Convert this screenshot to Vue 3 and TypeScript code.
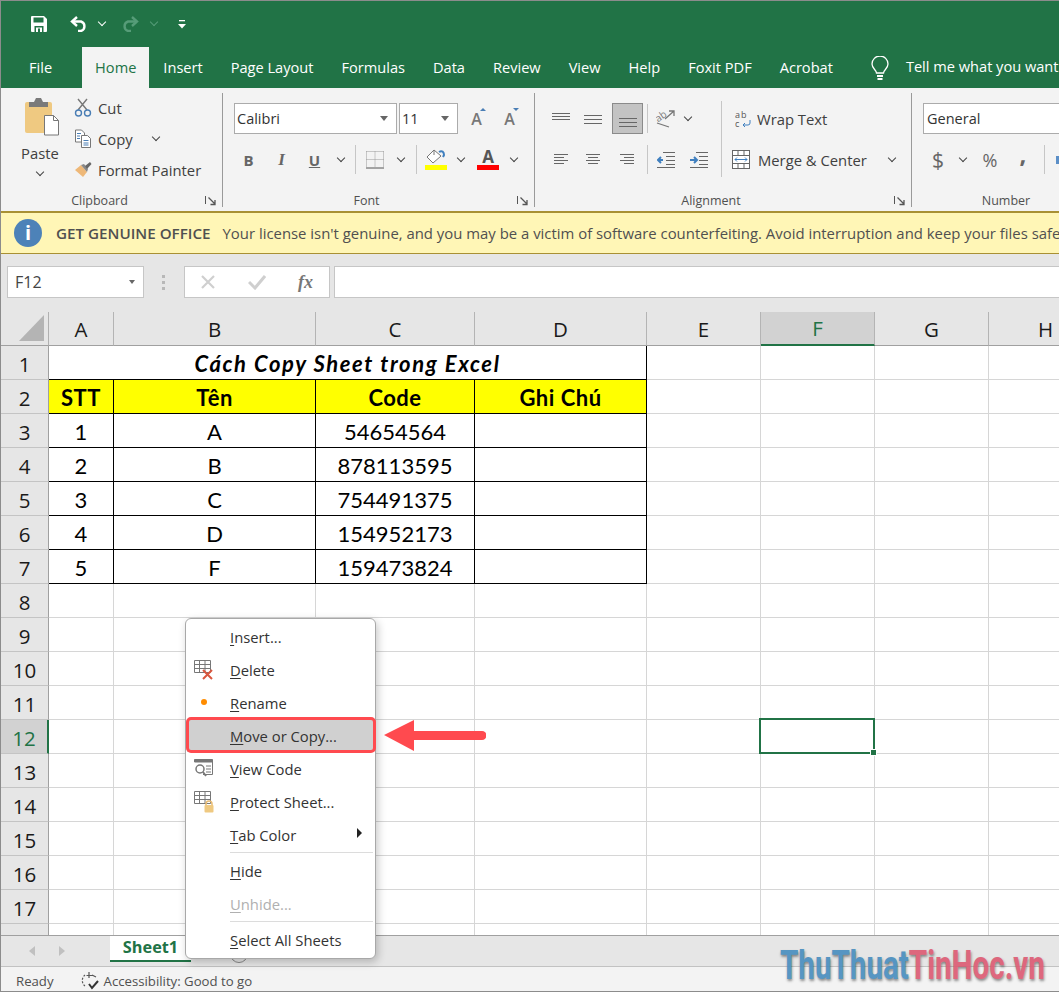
<template>
  <div class="window">
    <div class="titlebar">
      <svg class="save" width="16" height="16" viewBox="0 0 16 16">
        <path d="M0 1a1 1 0 0 1 1-1h12l3 3v12a1 1 0 0 1-1 1H1a1 1 0 0 1-1-1z" fill="#fff" />
        <rect x="2.5" y="1.5" width="10" height="5" fill="#217346" />
        <rect x="3.5" y="10" width="9" height="6" fill="#217346" />
        <rect x="5" y="11.5" width="6" height="4.5" fill="#fff" />
        <rect x="7" y="12.5" width="2" height="3.5" fill="#217346" />
      </svg>
      <svg class="undo" width="18" height="16" viewBox="0 0 18 16" fill="none" stroke="#fff" stroke-width="2.4">
        <path d="M7 1 2 5.500 7 10" />
        <path d="M2.500 5.500H11a5 5 0 0 1 0 9.500H8" />
      </svg>
      <span class="chev chev-white c1"></span>
      <svg class="redo" width="18" height="16" viewBox="0 0 18 16" fill="none" stroke="#569c78" stroke-width="2.4">
        <path d="M11 1l5 4.500L11 10" />
        <path d="M15.500 5.500H7a5 5 0 0 0 0 9.500h3" />
      </svg>
      <span class="chev chev-dim c2"></span>
      <svg class="custom" width="8" height="9" viewBox="0 0 8 9">
        <rect x="1" y="0" width="6" height="1.300" fill="#fff" />
        <path d="M0 4h8L4 8.500z" fill="#fff" />
      </svg>
    </div>

    <div class="tabs">
      <span
        v-for="tab in tabs"
        :key="tab"
        class="tab"
        :class="{ active: tab === 'Home' }"
      >{{ tab }}</span>
      <svg class="bulb" width="18" height="25" viewBox="0 0 18 25" fill="none" stroke="#fff" stroke-width="1.300">
        <path d="M5.500 17c0-3-4.500-4.500-4.500-9a8 8 0 0 1 16 0c0 4.500-4.500 6-4.500 9z" />
        <path d="M6 20h6M6.500 23h5" stroke-width="1.800" />
      </svg>
      <span class="tell">Tell me what you want to do</span>
    </div>

    <div class="ribbon">
      <!-- Clipboard -->
      <section class="group clipboard">
        <div class="body clip-body">
          <div class="paste">
            <svg class="paste-icon" width="36" height="40" viewBox="0 0 36 40">
              <rect x="1" y="5" width="27" height="31" rx="2" fill="#efc981" />
              <path d="M5 5h5l2-4h5l2 4h5v5H5z" fill="#7a7a7a" />
              <path d="M20.500 18.500h9l5 5v14.500h-14z" fill="#fff" stroke="#777" />
              <path d="M29.500 18.500v5h5" fill="none" stroke="#777" />
            </svg>
            <span class="paste-label">Paste</span>
            <span class="chev"></span>
          </div>
          <div class="clip-list">
            <div class="clip-item">
              <svg width="18" height="19" viewBox="0 0 18 19" fill="none">
                <path d="M4 1l9 11M13 1 4 12" stroke="#777" stroke-width="1.400" />
                <circle cx="4.500" cy="15" r="3" stroke="#4a7eb5" stroke-width="1.400" />
                <circle cx="13.500" cy="15" r="3" stroke="#4a7eb5" stroke-width="1.400" />
              </svg>
              <span>Cut</span>
            </div>
            <div class="clip-item">
              <svg width="18" height="19" viewBox="0 0 18 19" fill="none" stroke="#777">
                <path d="M1.500 1h6l3 3v9h-9z" fill="#fff" />
                <path d="M7.500 6.500h6l3 3v9h-9z" fill="#fff" />
                <path d="M3 4.500h4M3 7h3M3 9.500h3M9.500 11.500h5M9.500 14h5M9.500 16h5" stroke="#4a7eb5" />
              </svg>
              <span>Copy</span>
              <span class="chev copy-chev"></span>
            </div>
            <div class="clip-item">
              <svg width="18" height="18" viewBox="0 0 18 18">
                <path d="M1 9l6-5 6 7-4 5z" fill="#eeb878" />
                <path d="M7 4l3-1 4 5-1 3z" fill="#888" />
                <path d="M11 5l5-4 1.500 2-4.500 5z" fill="#666" />
              </svg>
              <span>Format Painter</span>
            </div>
          </div>
        </div>
        <div class="label-row">
          <span class="label">Clipboard</span>
          <svg class="launcher" width="11" height="10" viewBox="0 0 11 10" fill="none" stroke="#555">
            <path d="M.5 0v8" /><path d="M3.500 1.500 10 8M10 4v4.500H5.500" stroke-width="1.300" />
          </svg>
        </div>
      </section>

      <!-- Font -->
      <section class="group font">
        <div class="body">
          <div class="row font-row1">
            <div class="combo combo-font"><span class="combo-text">Calibri</span><span class="tri"></span></div>
            <div class="combo combo-size"><span class="combo-text">11</span><span class="tri"></span></div>
            <span class="grow-a grow-up">A<i class="mini mini-up"></i></span>
            <span class="grow-a grow-down">A<i class="mini mini-down"></i></span>
          </div>
          <div class="row font-row2">
            <span class="tb w33 fmt fmt-b">B</span>
            <span class="tb w33 fmt fmt-i">I</span>
            <span class="tb w33 fmt fmt-u">U</span>
            <span class="tb w20"><span class="chev"></span></span>
            <span class="vsep sep-a"></span>
            <span class="tb w38">
              <svg width="18" height="18" viewBox="0 0 18 18" fill="none" stroke="#999" stroke-dasharray="1 1">
                <path d="M.5.500h17M.5 8.500h17M.5.500v16M9 .500v16M17.500.500v16" />
                <path d="M0 17h18" stroke="#555" stroke-dasharray="none" />
              </svg>
            </span>
            <span class="tb w14"><span class="chev"></span></span>
            <span class="vsep sep-b"></span>
            <span class="tb w38 stack">
              <svg width="22" height="16" viewBox="0 0 22 16" fill="none">
                <path d="M9 1 2 8l6 6 8-7z" fill="#fff" stroke="#777" />
                <path d="M9 1v5" stroke="#777" />
                <path d="M14 3c3-2 5 0 5 3l-1 2" stroke="#3f7fbf" stroke-width="2" />
              </svg>
              <i class="colorbar yellow"></i>
            </span>
            <span class="tb w12"><span class="chev"></span></span>
            <span class="tb w42 stack">
              <span class="font-color">A</span>
              <i class="colorbar red"></i>
            </span>
            <span class="tb w10"><span class="chev"></span></span>
          </div>
        </div>
        <div class="label-row">
          <span class="label">Font</span>
          <svg class="launcher" width="11" height="10" viewBox="0 0 11 10" fill="none" stroke="#555">
            <path d="M.5 0v8" /><path d="M3.500 1.500 10 8M10 4v4.500H5.500" stroke-width="1.300" />
          </svg>
        </div>
      </section>

      <!-- Alignment -->
      <section class="group alignment">
        <div class="body align-body">
          <div class="align-left">
            <div class="row">
              <span class="tb w32">
                <svg width="20" height="18" viewBox="0 0 20 18" stroke="#666"><path d="M1 3.500h18M1 6.500h18M1 9.500h18" /></svg>
              </span>
              <span class="tb w32">
                <svg width="20" height="18" viewBox="0 0 20 18" stroke="#666"><path d="M1 5.500h18M1 9.500h18M1 13.500h18" /></svg>
              </span>
              <span class="tb w31 selected">
                <svg width="20" height="18" viewBox="0 0 20 18" stroke="#666"><path d="M1 8.500h18M1 12.500h18M1 16.500h18" /></svg>
              </span>
              <span class="vsep sep-c"></span>
              <span class="tb w36">
                <svg width="20" height="18" viewBox="0 0 20 18" fill="none" stroke="#777" stroke-width="1.300">
                  <path d="M1 13l12 4M9 9l9-8M13 1h5v5" />
                  <text x="0" y="10" class="ab" transform="rotate(-35 5 8)">ab</text>
                </svg>
              </span>
              <span class="tb w8"><span class="chev"></span></span>
            </div>
            <div class="row">
              <span class="tb w32">
                <svg width="16" height="14" viewBox="0 0 16 14" stroke="#666"><path d="M1 1.500h14M1 4.500h10M1 7.500h14M1 10.500h10" /></svg>
              </span>
              <span class="tb w32">
                <svg width="16" height="14" viewBox="0 0 16 14" stroke="#666"><path d="M1 1.500h14M3 4.500h10M1 7.500h14M3 10.500h10" /></svg>
              </span>
              <span class="tb w31 ml2">
                <svg width="16" height="14" viewBox="0 0 16 14" stroke="#666"><path d="M1 1.500h14M5 4.500h10M1 7.500h14M5 10.500h10" /></svg>
              </span>
              <span class="vsep sep-e"></span>
              <span class="tb w36">
                <svg width="18" height="16" viewBox="0 0 18 16" fill="none" stroke="#666">
                  <path d="M6 .500h12M9 4.500h9M9 8.500h9M9 12.500h9M0 15.500h18" />
                  <path d="M6 8H1M4 5 1 8l3 3" stroke="#3f7fbf" stroke-width="2" />
                </svg>
              </span>
              <span class="tb w32 shift">
                <svg width="18" height="16" viewBox="0 0 18 16" fill="none" stroke="#666">
                  <path d="M6 .500h12M9 4.500h9M9 8.500h9M9 12.500h9M0 15.500h18" />
                  <path d="M0 8h6M4 5l3 3-3 3" stroke="#3f7fbf" stroke-width="2" />
                </svg>
              </span>
            </div>
          </div>
          <span class="vsep sep-tall"></span>
          <div class="align-right">
            <div class="row wide-btn wrap">
              <svg width="16" height="18" viewBox="0 0 16 18" fill="none">
                <text x="0" y="8" class="abc">ab</text>
                <text x="0" y="17" class="abc">c</text>
                <path d="M15 10v3a2 2 0 0 1-2 2H8M10 13l-2 2 2 2" stroke="#3f7fbf" />
              </svg>
              <span>Wrap Text</span>
            </div>
            <div class="row wide-btn merge">
              <svg width="18" height="19" viewBox="0 0 18 19" fill="none" stroke="#666">
                <rect x=".5" y=".500" width="17" height="18" fill="#fff" />
                <path d="M.5 5.500h17M.5 13.500h17M6 .500v5M12 .500v5M6 13.500v5M12 13.500v5" />
                <path d="M3 9.500h12M5 7.500l-2 2 2 2M13 7.500l2 2-2 2" stroke="#3f7fbf" />
              </svg>
              <span>Merge &amp; Center</span>
              <span class="chev merge-chev"></span>
            </div>
          </div>
        </div>
        <div class="label-row">
          <span class="label">Alignment</span>
          <svg class="launcher" width="11" height="10" viewBox="0 0 11 10" fill="none" stroke="#555">
            <path d="M.5 0v8" /><path d="M3.500 1.500 10 8M10 4v4.500H5.500" stroke-width="1.300" />
          </svg>
        </div>
      </section>

      <!-- Number -->
      <section class="group number">
        <div class="body">
          <div class="row num-row1">
            <div class="combo combo-num"><span class="combo-text">General</span></div>
          </div>
          <div class="row num-row2">
            <span class="tb w32 sym dollar">$</span>
            <span class="tb w18"><span class="chev"></span></span>
            <span class="tb w36 sym pct">%</span>
            <span class="tb w30 sym comma">,</span>
            <span class="vsep sep-d"></span>
            <i class="next-icon"></i>
          </div>
        </div>
        <div class="label-row"><span class="label">Number</span></div>
      </section>
    </div>

    <div class="notice">
      <span class="info">i</span>
      <b>GET GENUINE OFFICE</b>
      <span class="notice-msg">Your license isn't genuine, and you may be a victim of software counterfeiting. Avoid interruption and keep your files safe with genuine Office today.</span>
    </div>

    <div class="formula">
      <div class="namebox"><span>F12</span><span class="tri tri-small"></span></div>
      <span class="dots"></span>
      <div class="fx-box">
        <svg width="16" height="16" viewBox="0 0 16 16" stroke="#cfcfcf" stroke-width="2.200"><path d="M2 2l12 12M14 2 2 14" /></svg>
        <svg width="18" height="16" viewBox="0 0 18 16" fill="none" stroke="#cfcfcf" stroke-width="3"><path d="M1 8l6 6L17 2" /></svg>
        <span class="fx">fx</span>
      </div>
      <div class="formula-input"></div>
    </div>

    <div class="sheet">
      <div class="corner"><i></i></div>
      <div
        v-for="col in columns"
        :key="col"
        class="col-head"
        :class="{ current: col === 'F' }"
      >{{ col }}</div>
      <template v-for="row in rows" :key="row">
        <div class="row-head" :class="{ current: row === 12 }">{{ row }}</div>
        <div v-if="row === 1" class="cell boxed title-cell">Cách Copy Sheet trong Excel</div>
        <template v-else-if="row <= 7">
          <div
            v-for="(text, i) in tableRows[row - 2]"
            :key="i"
            class="cell boxed"
            :class="{ heading: row === 2 }"
          >{{ text }}</div>
        </template>
        <template v-else>
          <div v-for="c in 4" :key="c" class="cell"></div>
        </template>
        <div
          v-for="col in ['E', 'F', 'G', 'H']"
          :key="col"
          class="cell"
          :class="{ picked: row === 12 && col === 'F' }"
        ></div>
      </template>
    </div>

    <div class="sheetbar">
      <span class="nav nav-left"></span>
      <span class="nav nav-right"></span>
      <span class="sheet-tab">Sheet1</span>
      <span class="add-sheet"></span>
    </div>

    <div class="status">
      <span>Ready</span>
      <svg class="a11y" width="20" height="20" viewBox="0 0 20 20" fill="none" stroke="#555" stroke-width="1.200">
        <path d="M5 4a7 7 0 0 0 0 11" stroke-dasharray="2 1.500" />
        <path d="M9 1v6M6.500 4.500h6M12 4l4 2" />
        <path d="M9 13l3 4 6-7" stroke="#333" stroke-width="2" />
      </svg>
      <span>Accessibility: Good to go</span>
    </div>

    <!-- context menu over the sheet -->
    <div class="menu">
      <template v-for="item in menuItems" :key="item.text">
        <div
          class="menu-item"
          :class="{ active: item.text === 'Move or Copy...', disabled: item.text === 'Unhide...' }"
        >
          <span class="menu-icon">
            <svg v-if="item.icon === 'delete'" width="20" height="20" viewBox="0 0 20 20" fill="none">
              <path d="M.5.500h16v12H.5zM.5 4.500h16M.5 8.500h16M5.500.500v12M11 .500v12" stroke="#777" />
              <path d="M9 10l9 9M18 10l-9 9" stroke="#d9573f" stroke-width="2" />
            </svg>
            <span v-else-if="item.icon === 'dot'" class="dot"></span>
            <svg v-else-if="item.icon === 'code'" width="20" height="20" viewBox="0 0 20 20" fill="none" stroke="#777">
              <path d="M.5 3V.500h18v15H9" /><rect x="1" y="1" width="17" height="2" fill="#777" />
              <circle cx="6" cy="10" r="4" stroke-width="1.500" /><path d="M9 13l3 4" stroke-width="1.800" />
              <path d="M12 7h5M12 10h5M12 13h5" />
            </svg>
            <svg v-else-if="item.icon === 'protect'" width="20" height="22" viewBox="0 0 20 22" fill="none">
              <path d="M.5.500h16v12H.5zM.5 4.500h16M.5 8.500h16M5.500.500v12M11 .500v12" stroke="#777" />
              <path d="M12 15v-2a3 3 0 0 1 6 0v2" stroke="#e8bc74" stroke-width="1.500" />
              <rect x="10.500" y="14" width="9" height="7.500" rx="1" fill="#efc981" />
            </svg>
          </span>
          <span class="menu-text"><u>{{ item.text[0] }}</u>{{ item.text.slice(1) }}</span>
          <span v-if="item.text === 'Tab Color'" class="submenu"></span>
        </div>
        <div v-if="item.line" class="menu-sep"></div>
      </template>
    </div>
    <div class="menu-focus"></div>

    <svg class="arrow" width="102" height="32" viewBox="0 0 102 32">
      <path d="M0 16 30 1v11h68a4 4 0 0 1 0 9H30v11z" fill="#ff4a4f" />
    </svg>

    <div class="watermark"><span class="wm-blue">ThuThuat</span><span class="wm-red">TinHoc.vn</span></div>
  </div>
</template>

<script setup lang="ts">
interface MenuItem {
  text: string;
  icon?: string;
  line?: boolean;
}

const tabs = ['File', 'Home', 'Insert', 'Page Layout', 'Formulas', 'Data', 'Review', 'View', 'Help', 'Foxit PDF', 'Acrobat'];

const columns = ['A', 'B', 'C', 'D', 'E', 'F', 'G', 'H'];
const rows = Array.from({ length: 18 }, (_, i) => i + 1);

const tableRows = [
  ['STT', 'Tên', 'Code', 'Ghi Chú'],
  ['1', 'A', '54654564', ''],
  ['2', 'B', '878113595', ''],
  ['3', 'C', '754491375', ''],
  ['4', 'D', '154952173', ''],
  ['5', 'F', '159473824', ''],
];

const menuItems: MenuItem[] = [
  { text: 'Insert...' },
  { text: 'Delete', icon: 'delete' },
  { text: 'Rename', icon: 'dot' },
  { text: 'Move or Copy...' },
  { text: 'View Code', icon: 'code' },
  { text: 'Protect Sheet...', icon: 'protect' },
  { text: 'Tab Color', line: true },
  { text: 'Hide' },
  { text: 'Unhide...', line: true },
  { text: 'Select All Sheets' },
];
</script>

<style>
html, body { margin: 0; background: #fff; }
</style>

<style scoped>
.window {
  position: relative;
  width: 1059px;
  height: 992px;
  box-sizing: border-box;
  overflow: hidden;
  display: flex;
  flex-direction: column;
  border: 1px solid #8c8c8c;
  border-right: 0;
  font-family: "Open Sans", "Noto Sans", sans-serif;
  color: #404040;
}

.titlebar {
  height: 46px;
  flex: none;
  display: flex;
  align-items: center;
  background: #217346;
  padding-left: 30px;
}
.undo { margin-left: 23px; }
.c1 { margin-left: 11px; }
.redo { margin-left: 16px; }
.c2 { margin-left: 12px; }
.custom { margin-left: 21px; }

.chev {
  display: inline-block;
  width: 5px;
  height: 5px;
  border-right: 1.5px solid #444;
  border-bottom: 1.5px solid #444;
  transform: translateY(-2px) rotate(45deg);
}
.chev-white { border-color: #fff; }
.chev-dim { border-color: #569c78; }

.tabs {
  height: 41px;
  flex: none;
  display: flex;
  align-items: flex-end;
  background: #217346;
  color: #fff;
  font-size: 14.600px;
  padding-left: 28px;
}
.tab {
  height: 41px;
  line-height: 40px;
  margin-right: 28px;
  white-space: nowrap;
}
.tab.active {
  background: #f3f3f3;
  color: #217346;
  margin: 0 14px 0 2px;
  padding: 0 13px;
}
.bulb {
  flex: none;
  margin: 0 0 7px 10px;
}
.tell {
  margin-left: 17px;
  height: 41px;
  line-height: 38px;
  white-space: nowrap;
}

.ribbon {
  height: 123px;
  flex: none;
  display: flex;
  box-sizing: border-box;
  padding: 5px 0 4px;
  background: #f3f3f3;
  overflow: hidden;
  font-size: 14.800px;
}
.group {
  flex: none;
  box-sizing: border-box;
  display: flex;
  flex-direction: column;
  border-right: 1px solid #9a9a9a;
}
.clipboard { width: 222px; }
.font { width: 312px; }
.alignment { width: 377px; }
.number { width: 210px; border-right: 0; }
.number .label { padding-right: 22px; }

.body {
  height: 93px;
  flex: none;
  box-sizing: border-box;
  padding-top: 10px;
  display: flex;
  flex-direction: column;
  gap: 10px;
}
.label-row {
  height: 21px;
  flex: none;
  box-sizing: border-box;
  padding-top: 8px;
  display: flex;
  align-items: center;
  font-size: 12.500px;
  color: #505050;
}
.label { flex: 1; text-align: center; }
.launcher { margin: 0 6px 0 7px; }

.row { height: 31px; display: flex; align-items: center; }

.clip-body { flex-direction: row; padding: 0; gap: 0; }
.paste {
  width: 73px;
  padding: 4px 0 0 5px;
  box-sizing: border-box;
  display: flex;
  flex-direction: column;
  align-items: center;
}
.paste-icon { margin-left: 3px; }
.paste-label { margin-top: 6px; line-height: 20px; }
.paste .chev { margin-top: 8px; }
.clip-list { margin-top: -1px; }
.clip-item {
  height: 31px;
  display: flex;
  align-items: center;
  gap: 6px;
  white-space: nowrap;
}
.clip-item svg { flex: none; }
.copy-chev { margin-left: 14px; }

.combo {
  height: 31px;
  box-sizing: border-box;
  background: #fff;
  border: 1px solid #ababab;
  display: flex;
  align-items: center;
  justify-content: space-between;
  padding: 0 4px 0 2px;
  color: #333;
}
.combo-font { width: 163px; }
.combo-size { width: 59px; margin-left: 2px; }
.combo-text { font-size: 14.500px; }
.tri {
  width: 0;
  height: 0;
  border: 4px solid transparent;
  border-top: 5px solid #666;
  border-bottom: 0;
  margin-right: 4px;
}
.font-row1 { padding-left: 11px; }
.grow-a {
  position: relative;
  width: 17px;
  text-align: center;
  font-size: 16px;
  font-weight: 600;
  color: #777;
}
.grow-up { margin-left: 10px; }
.grow-down { margin-left: 16px; }
.mini {
  position: absolute;
  right: -1px;
  top: 0;
  border: 3px solid transparent;
  border-top: 0;
  border-bottom: 3px solid #4a7eb5;
}
.mini-down {
  border-bottom: 0;
  border-top: 3px solid #4a7eb5;
}

.tb {
  height: 31px;
  flex: none;
  box-sizing: border-box;
  display: flex;
  align-items: center;
  justify-content: center;
}
.w8 { width: 8px; }
.w10 { width: 10px; }
.w12 { width: 12px; }
.w14 { width: 14px; }
.w18 { width: 18px; }
.w20 { width: 20px; }
.w30 { width: 30px; }
.w31 { width: 31px; }
.w32 { width: 32px; }
.w33 { width: 33px; }
.w36 { width: 36px; }
.w38 { width: 38px; }
.w42 { width: 42px; }

.font-row2 { padding-left: 9px; }
.fmt { font-size: 15px; font-weight: 700; color: #666; }
.fmt-i { font-style: italic; font-family: "Liberation Serif", serif; font-size: 17px; }
.fmt-u { text-decoration: underline; }
.vsep {
  flex: none;
  width: 1px;
  height: 29px;
  background: #c6c6c6;
}
.sep-a { margin-left: 4px; }
.sep-b { margin-left: 8px; }
.sep-c { margin-left: 4px; }
.sep-e { margin-left: 5px; }
.stack { flex-direction: column; gap: 0; }
.colorbar { display: block; width: 22px; height: 5px; }
.yellow { background: #ffff00; }
.red { background: #ff0000; }
.font-color {
  font-size: 17px;
  font-weight: 700;
  line-height: 16px;
  color: #555;
}

.align-body { flex-direction: row; gap: 0; padding-left: 10px; }
.align-left {
  width: 176px;
  display: flex;
  flex-direction: column;
  gap: 10px;
}
.selected {
  margin-left: 3px;
  background: #c3c3c3;
  border: 1px solid #8a8a8a;
}
.ml2 { margin-left: 2px; }
.shift { margin-left: -1px; }
.ab { font: 10px "Open Sans", sans-serif; fill: #777; stroke: none; }
.abc { font: 9px "Open Sans", sans-serif; fill: #555; stroke: none; letter-spacing: 1px; }
.sep-tall { height: 76px; margin-top: -2px; }
.align-right {
  flex: 1;
  display: flex;
  flex-direction: column;
  gap: 10px;
}
.wide-btn { white-space: nowrap; }
.wrap { padding-left: 13px; gap: 6px; }
.merge { padding-left: 10px; gap: 8px; }
.merge-chev { margin-left: 14px; }

.num-row1 { padding-left: 11px; }
.combo-num { width: 199px; }
.combo-num .combo-text { margin-left: 1px; }
.num-row2 { padding-left: 10px; }
.sym { font-size: 19px; color: #666; }
.dollar { font-size: 21px; }
.pct { font-size: 18px; margin-left: 0; }
.comma { font-size: 24px; font-weight: 700; padding-bottom: 12px; }
.sep-d { margin-left: 6px; }
.next-icon {
  flex: none;
  width: 6px;
  height: 8px;
  margin-left: 11px;
  background: #5b8fc7;
}

.notice {
  height: 43px;
  flex: none;
  box-sizing: border-box;
  display: flex;
  align-items: center;
  background: #fff6b6;
  border-top: 2px solid #a89034;
  border-bottom: 1px solid #a89034;
  padding-left: 13px;
  font-size: 14.900px;
  color: #505050;
  white-space: nowrap;
}
.info {
  flex: none;
  width: 28px;
  height: 28px;
  border-radius: 50%;
  background: #4d82b8;
  color: #fff;
  font-size: 20px;
  font-weight: 700;
  line-height: 28px;
  text-align: center;
}
.notice b { margin-left: 14px; font-size: 15.200px; font-weight: 600; }
.notice-msg { margin-left: 12px; }

.formula {
  height: 58px;
  flex: none;
  box-sizing: border-box;
  display: flex;
  align-items: center;
  background: #e6e6e6;
  padding: 0 0 2px 6px;
}
.namebox {
  width: 137px;
  height: 32px;
  box-sizing: border-box;
  display: flex;
  align-items: center;
  justify-content: space-between;
  padding-left: 7px;
  background: #fff;
  border: 1px solid #c6c6c6;
  font-size: 16px;
  color: #444;
}
.tri-small { margin-right: 8px; border-width: 3px; border-top-width: 4px; border-bottom: 0; }
.dots {
  width: 3px;
  height: 3px;
  margin: 0 19px 0 18px;
  background: #b8b8b8;
  box-shadow: 0 -6px 0 #b8b8b8, 0 6px 0 #b8b8b8;
}
.fx-box {
  width: 146px;
  height: 32px;
  box-sizing: border-box;
  display: flex;
  align-items: center;
  justify-content: space-between;
  padding: 0 16px 0 15px;
  background: #fff;
  border: 1px solid #c6c6c6;
}
.fx {
  font-family: "Liberation Serif", serif;
  font-style: italic;
  font-weight: 700;
  font-size: 18px;
  color: #777;
}
.formula-input {
  flex: 1;
  height: 32px;
  margin-left: 4px;
  box-sizing: border-box;
  background: #fff;
  border: 1px solid #c6c6c6;
  border-right: 0;
}

.sheet {
  flex: 1;
  min-height: 0;
  overflow: hidden;
  display: grid;
  grid-template-columns: 48px 65px 202px 159px 172px 114px 114px 114px 114px;
  grid-auto-rows: 34px;
  background: #fff;
  font-family: Lato, "Open Sans", sans-serif;
}
.corner {
  background: #e6e6e6;
  border-right: 1px solid #b0b0b0;
  border-bottom: 1px solid #a0a0a0;
  position: relative;
}
.corner i {
  position: absolute;
  right: 4px;
  bottom: 4px;
  width: 25px;
  height: 26px;
  background: #b4b4b4;
  clip-path: polygon(100% 0, 100% 100%, 0 100%);
}
.col-head,
.row-head {
  box-sizing: border-box;
  display: flex;
  align-items: center;
  justify-content: center;
  background: #e6e6e6;
  font-family: "Open Sans", sans-serif;
  font-size: 20.500px;
  color: #1a1a1a;
}
.col-head {
  border-right: 1px solid #b4b4b4;
  border-bottom: 1px solid #a0a0a0;
}
.row-head {
  padding-top: 2px;
  border-right: 1px solid #a0a0a0;
  border-bottom: 1px solid #c4c4c4;
}
.col-head.current {
  background: #d2d2d2;
  color: #217346;
  border-bottom: 2px solid #217346;
}
.row-head.current {
  background: #d2d2d2;
  color: #217346;
  border-right: 2px solid #217346;
}
.cell {
  box-sizing: border-box;
  display: flex;
  align-items: center;
  justify-content: center;
  position: relative;
  padding-top: 1px;
  border-right: 1px solid #d6d6d6;
  border-bottom: 1px solid #d6d6d6;
  font-size: 22px;
  color: #000;
}
.boxed {
  border-right-color: #000;
  border-bottom-color: #000;
}
.title-cell {
  grid-column: span 4;
  font-weight: 700;
  font-style: italic;
  letter-spacing: 1.600px;
}
.heading {
  background: #ffff00;
  font-weight: 700;
  letter-spacing: 0.500px;
}
.picked::after {
  content: "";
  position: absolute;
  inset: -2px -1px -1px -2px;
  border: 2px solid #217346;
}
.picked::before {
  content: "";
  position: absolute;
  right: -3px;
  bottom: -3px;
  z-index: 1;
  width: 5px;
  height: 5px;
  background: #217346;
  border: 1px solid #fff;
}

.sheetbar {
  height: 32px;
  flex: none;
  box-sizing: border-box;
  display: flex;
  background: #e6e6e6;
  border-top: 1px solid #a0a0a0;
  border-bottom: 1px solid #c2c2c2;
}
.nav {
  align-self: center;
  width: 0;
  height: 0;
  border: 5px solid transparent;
}
.nav-left { margin-left: 28px; border-left: 0; border-right: 6px solid #c0c0c0; }
.nav-right { margin-left: 24px; border-right: 0; border-left: 6px solid #c0c0c0; }
.sheet-tab {
  margin-left: 45px;
  width: 81px;
  height: 26px;
  box-sizing: border-box;
  background: #fff;
  border-bottom: 2px solid #217346;
  color: #217346;
  font-size: 16.300px;
  font-weight: 700;
  line-height: 22px;
  text-align: center;
}
.add-sheet {
  margin: 9px 0 0 39px;
  width: 16px;
  height: 16px;
  border: 1px solid #888;
  border-radius: 50%;
}

.status {
  height: 24px;
  flex: none;
  box-sizing: border-box;
  display: flex;
  align-items: center;
  background: #f3f3f3;
  padding: 3px 0 0 15px;
  font-size: 13.200px;
  color: #505050;
}
.a11y { margin: 0 4px 0 26px; }

.menu {
  position: absolute;
  left: 184px;
  top: 617px;
  width: 191px;
  height: 341px;
  box-sizing: border-box;
  padding-top: 1px;
  background: #fff;
  border: 1px solid #a8a8a8;
  border-radius: 6px;
  box-shadow: 2px 3px 8px rgba(0, 0, 0, 0.22);
  font-size: 14.800px;
  color: #333;
}
.menu-item {
  position: relative;
  height: 33px;
  margin: 0 1px;
  display: flex;
  align-items: center;
}
.menu-item.active { background: #d0d0d0; }
.menu-item.disabled { color: #b0b0b0; }
.menu-icon {
  width: 34px;
  margin-right: 9px;
  flex: none;
  display: flex;
  justify-content: center;
}
.dot {
  width: 6px;
  height: 6px;
  border-radius: 50%;
  background: #ff8c00;
  margin-top: -2px;
}
.menu-text { white-space: nowrap; }
.menu-text u { text-underline-offset: 2px; }
.submenu {
  position: absolute;
  right: 12px;
  top: 10px;
  width: 0;
  height: 0;
  border: 5px solid transparent;
  border-right: 0;
  border-left: 5px solid #222;
}
.menu-sep {
  height: 1px;
  margin: 1px 2px 1px 44px;
  background: #dcdcdc;
}
.menu-focus {
  position: absolute;
  left: 185px;
  top: 716px;
  width: 190px;
  height: 36px;
  box-sizing: border-box;
  border: 3px solid #ff4a4f;
  border-radius: 5px;
}
.arrow {
  position: absolute;
  left: 383px;
  top: 718px;
}
.watermark {
  position: absolute;
  left: 779px;
  top: 941px;
  font-family: Roboto, sans-serif;
  font-size: 40px;
  font-weight: 700;
  line-height: 48px;
  white-space: nowrap;
  transform: scaleX(0.74);
  transform-origin: left center;
  opacity: 0.92;
  text-shadow: 1px 2px 3px rgba(0, 0, 0, 0.45);
}
.wm-blue { color: #4a8fbf; }
.wm-red { color: #dd5d75; }
</style>
